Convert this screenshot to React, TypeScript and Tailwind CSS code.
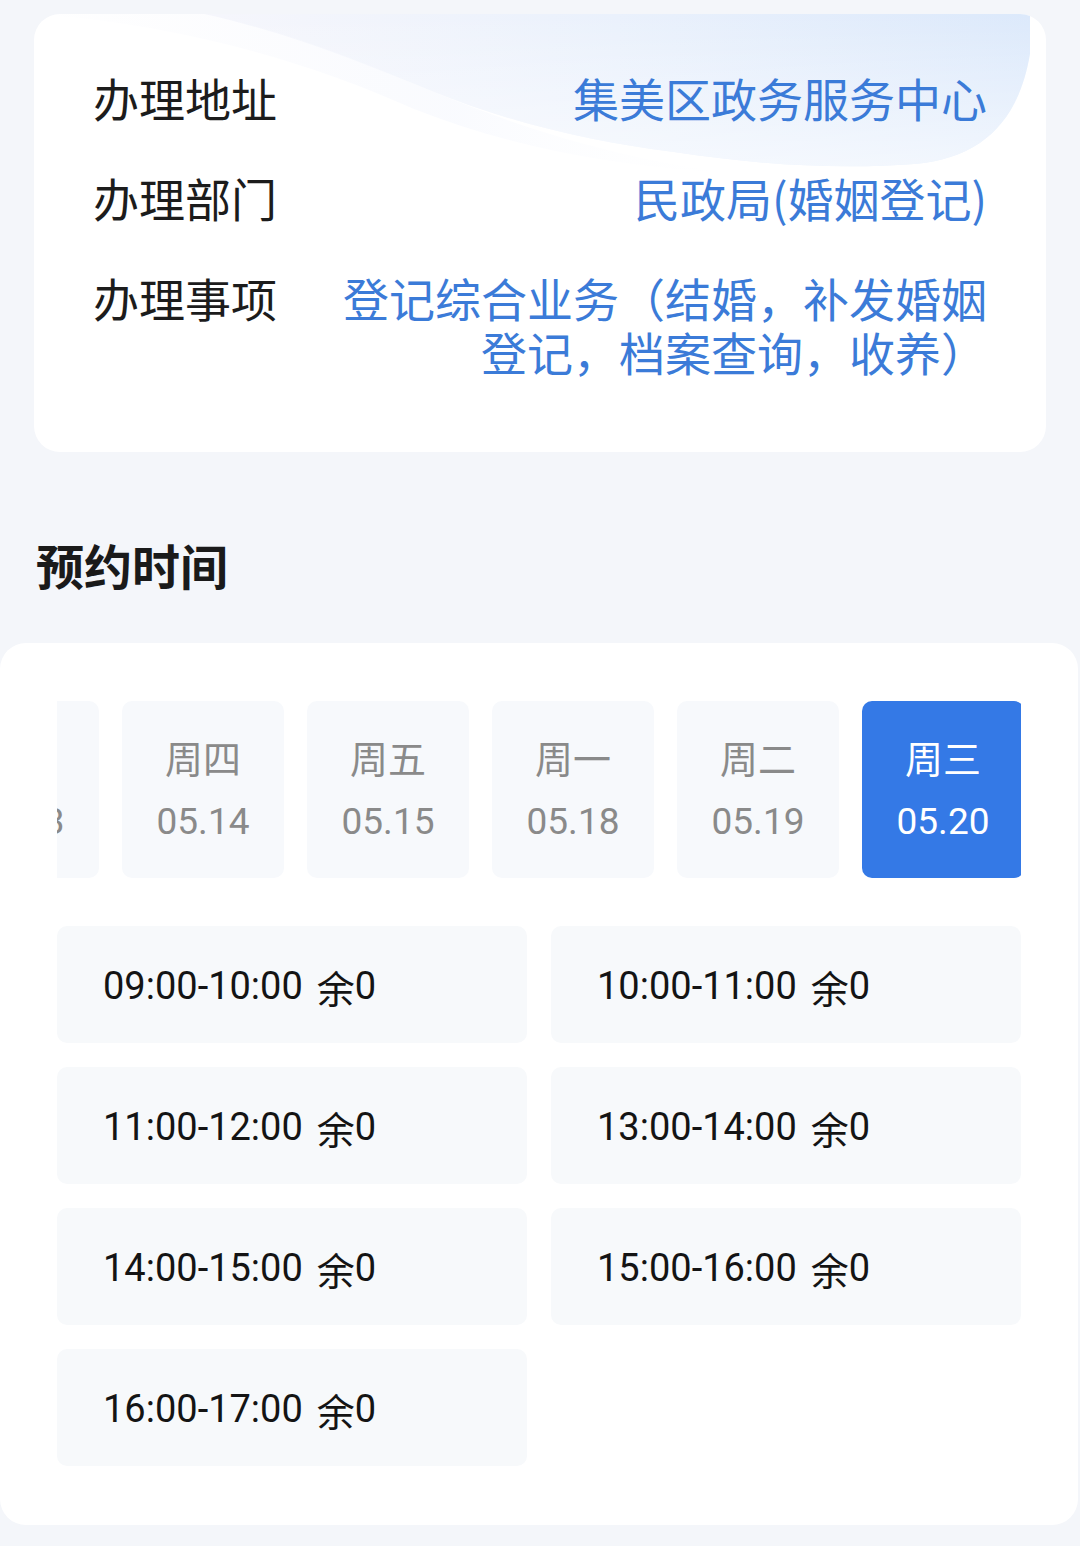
import React from "react";

const FONT = 'Roboto, "Noto Sans CJK SC", "Noto Sans", sans-serif';
const CJK = '"Noto Sans CJK SC", "Noto Sans", sans-serif';

const days = [
  { w: "周三", d: "05.13" },
  { w: "周四", d: "05.14" },
  { w: "周五", d: "05.15" },
  { w: "周一", d: "05.18" },
  { w: "周二", d: "05.19" },
  { w: "周三", d: "05.20", active: true },
];

const slots = [
  "09:00-10:00",
  "10:00-11:00",
  "11:00-12:00",
  "13:00-14:00",
  "14:00-15:00",
  "15:00-16:00",
  "16:00-17:00",
];

function Wave() {
  return (
    <svg
      className="absolute left-0 top-0 pointer-events-none"
      width="1012"
      height="200"
      viewBox="0 0 1012 200"
    >
      <defs>
        <linearGradient id="wg1" x1="0" y1="0" x2="1" y2="0">
          <stop offset="0" stopColor="#f3f4fb" stopOpacity="0.8" />
          <stop offset="0.5" stopColor="#eaf1fc" />
          <stop offset="1" stopColor="#dce9fb" />
        </linearGradient>
        <linearGradient id="wv" x1="0" y1="0" x2="0" y2="1">
          <stop offset="0" stopColor="#ffffff" stopOpacity="0" />
          <stop offset="1" stopColor="#ffffff" stopOpacity="0.6" />
        </linearGradient>
        <linearGradient id="wg2" x1="0" y1="0" x2="1" y2="0">
          <stop offset="0" stopColor="#f5f6fc" stopOpacity="0" />
          <stop offset="0.6" stopColor="#f7f9fe" stopOpacity="0.7" />
          <stop offset="1" stopColor="#ffffff" stopOpacity="0.2" />
        </linearGradient>
      </defs>
      <path
        d="M170 0 C 260 20, 330 50, 400 78 C 480 110, 560 128, 640 138 C 720 150, 800 156, 880 150 C 950 144, 985 105, 996 40 L 996 0 Z"
        fill="url(#wg1)"
      />
      <path
        d="M170 0 C 260 20, 330 50, 400 78 C 480 110, 560 128, 640 138 C 720 150, 800 156, 880 150 C 950 144, 985 105, 996 40 L 996 0 Z"
        fill="url(#wv)"
      />
      <path
        d="M0 0 C 150 10, 280 50, 380 95 C 470 130, 560 150, 700 160 C 560 140, 480 110, 400 78 C 320 45, 250 15, 170 0 Z"
        fill="url(#wg2)"
      />
    </svg>
  );
}

export default function App() {
  return (
    <div
      className="w-[1080px] h-[1546px] bg-[#f4f6fa] overflow-hidden pt-[14px]"
      style={{ fontFamily: FONT }}
    >
      {/* Info card */}
      <div className="relative mx-[34px] bg-white rounded-[26px] overflow-hidden px-[59px] pt-[56px] pb-[74px]">
        <Wave />
        <div
          className="relative flex flex-col gap-[46px] text-[46px] leading-[54px]"
          style={{ fontFamily: CJK }}
        >
          <div className="flex">
            <div className="w-[246px] shrink-0 text-[#1c1c1c]">办理地址</div>
            <div className="flex-1 text-right text-[#3b7bd8]">集美区政务服务中心</div>
          </div>
          <div className="flex">
            <div className="w-[246px] shrink-0 text-[#1c1c1c]">办理部门</div>
            <div className="flex-1 text-right text-[#3b7bd8]">民政局(婚姻登记)</div>
          </div>
          <div className="flex">
            <div className="w-[246px] shrink-0 text-[#1c1c1c]">办理事项</div>
            <div className="flex-1 text-right text-[#3b7bd8]">
              登记综合业务（结婚，补发婚姻登记，档案查询，收养）
            </div>
          </div>
        </div>
      </div>

      {/* Title */}
      <div
        className="pl-[36px] mt-[85px] mb-[52px] text-[48px] leading-[54px] font-bold text-[#1a1a1a]"
        style={{ fontFamily: CJK }}
      >
        预约时间
      </div>

      {/* Time card */}
      <div className="w-[1078px] bg-white rounded-[26px] px-[57px] pt-[58px] pb-[59px]">
        <div className="overflow-hidden">
          <div className="flex gap-[23px] ml-[-120px]">
            {days.map((d, i) => (
              <div
                key={i}
                className={
                  "w-[162px] h-[177px] shrink-0 rounded-[10px] flex flex-col items-center justify-center gap-[12px] " +
                  (d.active ? "bg-[#3479e6] text-white" : "bg-[#f7f9fc] text-[#8a8a8a]")
                }
              >
                <div className="text-[38px] leading-[50px]" style={{ fontFamily: CJK }}>
                  {d.w}
                </div>
                <div className="text-[37px] leading-[50px] pt-[3px]">{d.d}</div>
              </div>
            ))}
          </div>
        </div>

        <div className="grid grid-cols-2 gap-x-[24px] gap-y-[24px] mt-[48px]">
          {slots.map((s) => (
            <div
              key={s}
              className="h-[117px] rounded-[10px] bg-[#f7f9fb] flex items-center pl-[46px] pt-[3px] text-[38px] text-[#141414]"
            >
              <span>{s}</span>
              <span className="ml-[14px]" style={{ fontFamily: CJK }}>
                余
              </span>
              <span>0</span>
            </div>
          ))}
        </div>
      </div>
    </div>
  );
}
